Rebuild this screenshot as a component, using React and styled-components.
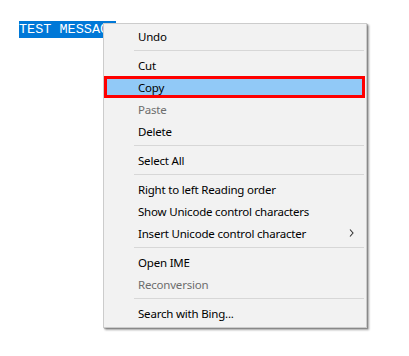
import React from "react";
import styled, { createGlobalStyle } from "styled-components";

const Global = createGlobalStyle`
  html, body { margin: 0; padding: 0; background: #ffffff; }
  body { font-family: "Noto Sans", "DejaVu Sans", sans-serif; }
`;

const Page = styled.div`
  position: relative;
  width: 409px;
  height: 356px;
  padding: 16px 0 0 19px;
  box-sizing: border-box;
`;

const Selected = styled.span`
  display: inline-block;
  background: #0078d7;
  color: #ffffff;
  font-family: "Liberation Mono", "DejaVu Sans Mono", monospace;
  font-size: 13.5px;
  line-height: 17px;
  height: 17px;
  white-space: pre;
`;

const Menu = styled.div`
  position: absolute;
  left: 103px;
  top: 23px;
  width: 264px;
  box-sizing: border-box;
  background: #f2f2f2;
  border: 1px solid #cccccc;
  padding: 1px 0 3px 0;
  display: flex;
  flex-direction: column;
  box-shadow: 2px 2px 2px rgba(0, 0, 0, 0.35), 1px 1px 1px rgba(0, 0, 0, 0.2);
`;

const Item = styled.div`
  position: relative;
  display: flex;
  align-items: center;
  height: 22px;
  padding-left: 34px;
  padding-right: 11px;
  margin-right: 1px;
  font-size: 11.5px;
  letter-spacing: -0.2px;
  color: ${(p) => (p.$disabled ? "#6d6d6d" : "#000000")};
  background: ${(p) => (p.$active ? "#91c9f7" : "transparent")};
  box-shadow: ${(p) => (p.$active ? "inset 0 0 0 3px #ff0000" : "none")};
  white-space: nowrap;
`;

const Label = styled.span`
  flex: 1;
`;

const Separator = styled.div`
  height: 7px;
  display: flex;
  flex-direction: column;
  padding-top: 3px;
  box-sizing: border-box;
  margin: 0 2px 0 30px;
  &::after {
    content: "";
    display: block;
    height: 1px;
    background: #d7d7d7;
  }
`;

const Arrow = () => (
  <svg width="5" height="8" viewBox="0 0 5 8" style={{ display: "block" }}>
    <path d="M1 0.5 L4 4 L1 7.5" fill="none" stroke="#333" strokeWidth="1.1" />
  </svg>
);

const items = [
  { label: "Undo" },
  "sep",
  { label: "Cut" },
  { label: "Copy", active: true },
  { label: "Paste", disabled: true },
  { label: "Delete" },
  "sep",
  { label: "Select All" },
  "sep",
  { label: "Right to left Reading order" },
  { label: "Show Unicode control characters" },
  { label: "Insert Unicode control character", sub: true },
  "sep",
  { label: "Open IME" },
  { label: "Reconversion", disabled: true },
  "sep",
  { label: "Search with Bing..." },
];

export default function App() {
  return (
    <>
      <Global />
      <Page>
        <Selected>TEST MESSAGE</Selected>
        <Menu>
          {items.map((it, i) =>
            it === "sep" ? (
              <Separator key={i} />
            ) : (
              <Item key={i} $active={it.active} $disabled={it.disabled}>
                <Label>{it.label}</Label>
                {it.sub && <Arrow />}
              </Item>
            )
          )}
        </Menu>
      </Page>
    </>
  );
}
